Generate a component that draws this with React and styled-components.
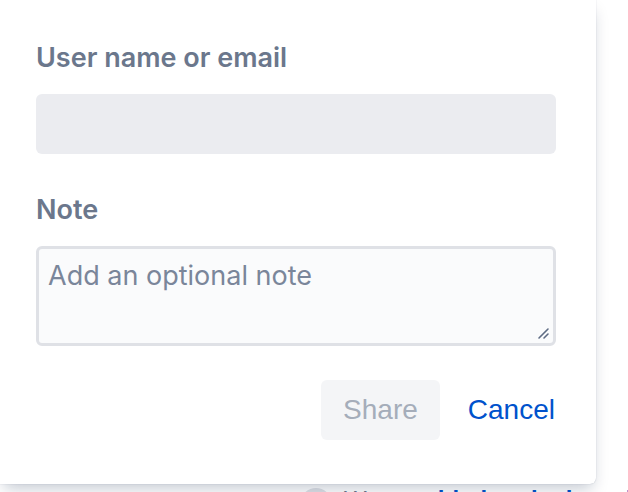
import React from "react";
import styled, { createGlobalStyle } from "styled-components";

const Global = createGlobalStyle`
  html, body { margin: 0; padding: 0; background: #ffffff; overflow: hidden; }
  body { width: 628px; height: 492px; }
  #root { width: 628px; height: 492px; }
`;

const Page = styled.div`
  width: 628px;
  height: 492px;
  overflow: hidden;
  display: flex;
  flex-direction: column;
`;

const Card = styled.div`
  position: relative;
  z-index: 1;
  flex-shrink: 0;
  width: 596px;
  height: 484px;
  box-sizing: border-box;
  background: #ffffff;
  border-radius: 0 0 6px 0;
  box-shadow: 0 8px 16px -4px rgba(9, 30, 66, 0.25), 0 0 1px rgba(9, 30, 66, 0.31);
  padding: 42px 40px 0 36px;
  display: flex;
  flex-direction: column;
`;

const Label = styled.label`
  font-family: "Inter", "Roboto", sans-serif;
  font-weight: 600;
  font-size: 27px;
  line-height: 32px;
  color: #6b778c;
  margin-bottom: ${(p) => p.$gap}px;
`;

const Input = styled.div`
  height: 60px;
  background: #ebecf0;
  border-radius: 6px;
  margin-bottom: 40px;
`;

const TextArea = styled.div`
  position: relative;
  height: 100px;
  box-sizing: border-box;
  background: #fafbfc;
  border: 3px solid #dfe1e6;
  border-radius: 6px;
  padding: 10px 9px;
  font-family: "Inter", "Roboto", sans-serif;
  font-size: 27px;
  line-height: 34px;
  color: #7a869a;
`;

const Grip = styled.svg`
  position: absolute;
  right: 3px;
  bottom: 3px;
`;

const Footer = styled.div`
  display: flex;
  justify-content: flex-end;
  align-items: center;
  gap: 28px;
  margin-top: 34px;
`;

const Button = styled.button`
  height: 60px;
  border: none;
  border-radius: 6px;
  font-family: "Liberation Sans", Arial, sans-serif;
  font-size: 28px;
  padding: ${(p) => (p.$link ? "0" : "0 22px")};
  background: ${(p) => (p.$link ? "transparent" : "#f4f5f7")};
  color: ${(p) => (p.$link ? "#0052cc" : "#a5adba")};
  margin-right: ${(p) => (p.$link ? "1px" : "0")};
`;

const Behind = styled.div`
  display: flex;
  align-items: flex-start;
  gap: 12px;
  margin-top: 4px;
  padding-left: 300px;
  font-family: "Liberation Sans", Arial, sans-serif;
  font-size: 24px;
  line-height: 1;
  white-space: nowrap;
`;

const Avatar = styled.div`
  flex-shrink: 0;
  width: 32px;
  height: 32px;
  border-radius: 50%;
  background: #dfe1e6;
`;

const BehindText = styled.span`
  color: ${(p) => p.$c};
  font-weight: ${(p) => p.$w};
`;

export default function App() {
  return (
    <>
      <Global />
      <Page>
        <Card>
          <Label $gap={20}>User name or email</Label>
          <Input />
          <Label $gap={20}>Note</Label>
          <TextArea>
            Add an optional note
            <Grip width="14" height="14" viewBox="0 0 14 14">
              <path d="M3 12 L12 3 M8 12 L12 8" stroke="#5e6c84" strokeWidth="1.6" strokeLinecap="round" />
            </Grip>
          </TextArea>
          <Footer>
            <Button disabled>Share</Button>
            <Button $link>Cancel</Button>
          </Footer>
        </Card>
        <Behind>
          <Avatar />
          <BehindText $c="#6b778c" $w={400}>Was</BehindText>
          <BehindText $c="#0052cc" $w={700}>&nbsp;&nbsp;added to the board</BehindText>
        </Behind>
      </Page>
    </>
  );
}
